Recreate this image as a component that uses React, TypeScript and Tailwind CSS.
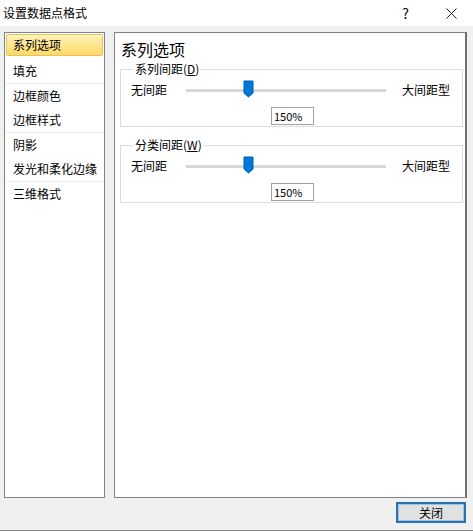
const items = [
  { label: "系列选项", sep: false },
  { label: "填充", sep: true },
  { label: "边框颜色", sep: false },
  { label: "边框样式", sep: true },
  { label: "阴影", sep: false },
  { label: "发光和柔化边缘", sep: true },
  { label: "三维格式", sep: false },
];

function Thumb() {
  return (
    <svg width="11" height="18" viewBox="0 0 11 18" className="block">
      <path d="M1 1 H10 V13 L5.5 17 L1 13 Z" fill="#0078d7" stroke="#005fb0" strokeWidth="1" />
    </svg>
  );
}

function Group({ legend, hotkey, top }: { legend: string; hotkey: string; top: string }) {
  return (
    <fieldset className={`border border-[#dcdcdc] ml-[5px] mr-[2px] ${top} h-[65px] pl-[10px] pr-[12px]`}>
      <legend className="ml-[2px] px-[2px] text-[12px] leading-[14px] text-black">
        {legend}(<span className="underline">{hotkey}</span>)
      </legend>
      <div className="flex items-center h-[22px] mt-[3px]">
        <span className="w-[55px] text-[12px]">无间距</span>
        <div className="relative w-[200px] h-[22px] flex items-center">
          <div className="w-full h-[3px] bg-[#d7d7d7]" />
          <div className="absolute left-[57px] top-[1px]">
            <Thumb />
          </div>
        </div>
        <span className="ml-auto text-[12px]">大间距型</span>
      </div>
      <div className="flex justify-center mt-[6px]">
        <div className="w-[43px] h-[18px] border border-[#a0a0a0] bg-white text-[11px] leading-[16px] px-[2px] ml-[4px]">150%</div>
      </div>
    </fieldset>
  );
}

export default function App() {
  return (
    <div
      className="w-[473px] h-[531px] bg-[#f0f0f0] flex flex-col text-black border-b border-[#8c8c8c]"
      style={{ fontFamily: '"Noto Sans CJK SC", "Noto Sans", sans-serif' }}
    >
      <div className="h-[26px] bg-white flex items-center pl-[3px] shrink-0">
        <span className="text-[12px]">设置数据点格式</span>
        <span className="ml-auto mr-[37px] text-[14px]">?</span>
        <svg width="11" height="11" viewBox="0 0 11 11" className="mr-[16px]">
          <path d="M0.5 0.5 L10.5 10.5 M10.5 0.5 L0.5 10.5" stroke="#222" strokeWidth="1" />
        </svg>
      </div>

      <div className="flex gap-[9px] pl-[4px] pt-[6px] shrink-0">
        <div className="w-[101px] h-[466px] bg-white border border-[#828282] p-[1px] flex flex-col">
          {items.map((it, i) => (
            <div key={it.label} className={it.sep ? "border-b border-[#ececec]" : ""}>
              {i === 0 ? (
                <div className="h-[22px] mb-[3px] rounded-[2px] border border-[#e5c365] bg-gradient-to-b from-[#fff3b8] to-[#ffd861] flex items-center pl-[6px] text-[12px]">
                  {it.label}
                </div>
              ) : (
                <div className="h-[24px] flex items-center pl-[7px] text-[12px]">{it.label}</div>
              )}
            </div>
          ))}
        </div>

        <div className="w-[353px] h-[466px] bg-white border border-[#828282] border-r-[2px] border-r-[#6e6e6e]">
          <div className="text-[16px] leading-[16px] pl-[6px] pt-[8px]">系列选项</div>
          <Group legend="系列间距" hotkey="D" top="mt-[5px]" />
          <Group legend="分类间距" hotkey="W" top="mt-[11px]" />
        </div>
      </div>

      <div className="flex justify-end pr-[7px] pt-[4px]">
        <button className="w-[70px] h-[21px] border-2 border-[#2b73b0] bg-[#e1e1e1] text-[12px] leading-[14px] flex items-center justify-center outline outline-1 outline-[#99c4e6] outline-offset-[-3px]">
          关闭
        </button>
      </div>
    </div>
  );
}
